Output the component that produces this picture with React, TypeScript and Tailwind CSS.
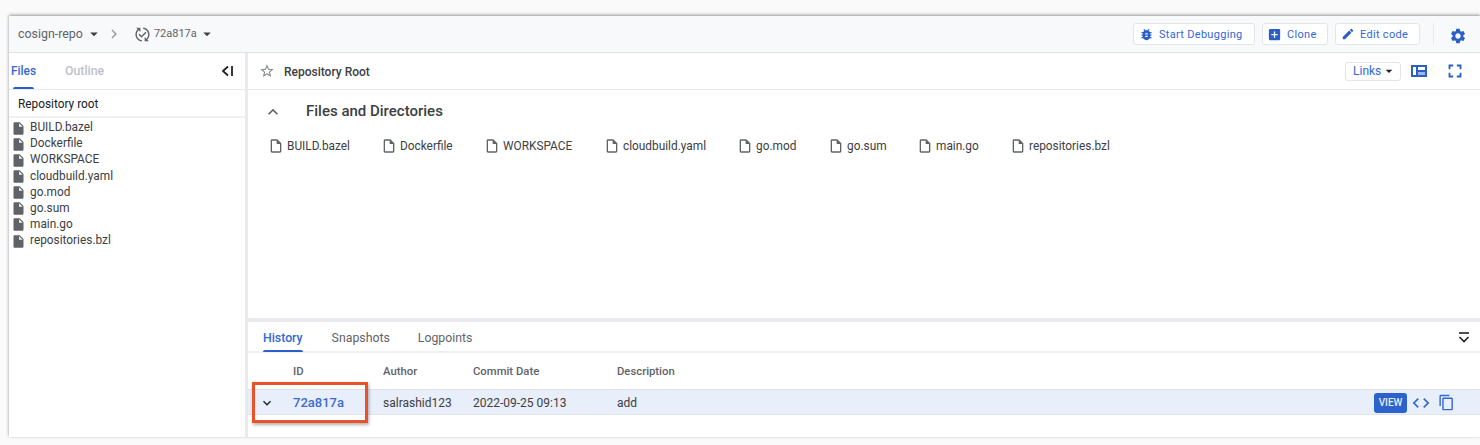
import {
  MdAddBox,
  MdArrowDropDown,
  MdBugReport,
  MdChevronRight,
  MdCode,
  MdContentCopy,
  MdEdit,
  MdFullscreen,
  MdInsertDriveFile,
  MdKeyboardArrowDown,
  MdKeyboardArrowUp,
  MdOutlineInsertDriveFile,
  MdPublishedWithChanges,
  MdSettings,
  MdStarBorder,
} from 'react-icons/md';

const FILES = ['BUILD.bazel', 'Dockerfile', 'WORKSPACE', 'cloudbuild.yaml', 'go.mod', 'go.sum', 'main.go', 'repositories.bzl'];

const GRID_FILES = [
  { name: 'BUILD.bazel', width: 'w-[113px]' },
  { name: 'Dockerfile', width: 'w-[103px]' },
  { name: 'WORKSPACE', width: 'w-[120px]' },
  { name: 'cloudbuild.yaml', width: 'w-[133px]' },
  { name: 'go.mod', width: 'w-[91px]' },
  { name: 'go.sum', width: 'w-[89px]' },
  { name: 'main.go', width: 'w-[93px]' },
  { name: 'repositories.bzl', width: 'w-[110px]' },
];

export default function App() {
  return (
    <div className="h-[445px] w-[1480px] overflow-hidden bg-[#fafafa] pl-[9px] pt-4 font-['Roboto',sans-serif] text-[11.85px] text-[#3c4043]">
      <div className="relative flex h-[421px] flex-col bg-white shadow-[0_-1px_3px_rgba(60,64,67,0.55)]">
        <header className="flex h-[37px] shrink-0 items-center border-b border-[#e0e2e5] bg-[#f8f9fa] pl-[9px]">
          <span className="text-[12.4px] text-[#5f6368]">cosign-repo</span>
          <MdArrowDropDown className="ml-[2px] h-[18px] w-[18px] text-[#3c4043]" />
          <MdChevronRight className="ml-[2px] h-[18px] w-[18px] text-[#9aa0a6]" />
          <MdPublishedWithChanges className="ml-[11px] h-[17px] w-[17px] text-[#5f6368]" />
          <span className="ml-[3px] text-[11px] text-[#5f6368]">72a817a</span>
          <MdArrowDropDown className="ml-[1px] h-[18px] w-[18px] text-[#3c4043]" />
          <div className="ml-auto flex items-center pr-[13px] text-[11px] font-medium tracking-[0.3px] text-[#3367d6]">
            <button className="flex h-[22px] w-[122px] items-center rounded-[3px] border border-[#e3e5e8] bg-white pl-[5px]">
              <MdBugReport className="h-[15px] w-[15px] text-[#2b5fc7]" />
              <span className="ml-[5px] mt-[2px] font-normal">Start Debugging</span>
            </button>
            <button className="ml-[7px] flex h-[22px] w-[66px] items-center rounded-[3px] border border-[#e3e5e8] bg-white pl-[4px]">
              <MdAddBox className="h-[15px] w-[15px] text-[#2b5fc7]" />
              <span className="ml-[5px] mt-[2px] font-normal">Clone</span>
            </button>
            <button className="ml-[7px] flex h-[22px] w-[85px] items-center rounded-[3px] border border-[#e3e5e8] bg-white pl-[5px]">
              <MdEdit className="h-[14px] w-[14px] text-[#2b5fc7]" />
              <span className="ml-[5px] mt-[2px] font-normal">Edit code</span>
            </button>
            <div className="ml-[13px] h-[22px] w-px bg-[#e8eaed]" />
            <MdSettings className="ml-[15px] mt-[3px] h-[18px] w-[18px] text-[#2b5fc7]" />
          </div>
        </header>

        <div className="flex min-h-0 flex-1">
          <aside className="flex w-[236px] shrink-0 flex-col">
            <div className="flex h-[37px] shrink-0 border-b border-[#e8eaed] pl-[2px]">
              <div className="relative flex w-[25px] items-center justify-center pt-px font-medium text-[#3367d6]">
                Files
                <span className="absolute bottom-0 left-[2px] h-[2px] w-[21px] rounded-t-sm bg-[#2b5fc7]" />
              </div>
              <div className="ml-[29px] flex items-center pt-px text-[12.3px] font-medium text-[#bdc1c6]">Outline</div>
              <svg viewBox="0 0 14 12" className="ml-auto mr-[11px] mt-[12px] h-3 w-[14px] text-[#202124]" fill="none" stroke="currentColor" strokeWidth="1.8">
                <path d="M8 1.5 3 6l5 4.5" />
                <path d="M12 1v10" />
              </svg>
            </div>
            <div className="flex h-[28px] shrink-0 items-center border-b-2 border-[#eff0f1] pl-[9px] pt-[3px] text-[#202124]">Repository root</div>
            <ul className="pl-[3px] pt-[2px]">
              {FILES.map((file) => (
                <li key={file} className="flex h-[16.15px] items-center text-[#3c4043]">
                  <MdInsertDriveFile className="ml-[-1px] h-[15px] w-[15px] text-[#5f6368]" />
                  <span className="ml-[4px]">{file}</span>
                </li>
              ))}
            </ul>
          </aside>

          <main className="flex min-w-0 flex-1 flex-col border-l-[3px] border-[#e8eaed]">
            <div className="flex h-[37px] shrink-0 items-center border-b border-[#e8eaed] pl-[11px] pr-[14px]">
              <MdStarBorder className="h-[16px] w-[16px] text-[#80868b]" />
              <span className="ml-[9px] pt-px text-xs font-medium text-[#3c4043]">Repository Root</span>
              <button className="ml-auto flex h-[19px] w-[56px] items-center rounded-[3px] border border-[#e3e5e8] pl-[7px] text-xs text-[#3367d6]">
                Links
                <MdArrowDropDown className="h-4 w-4 text-[#202124]" />
              </button>
              <svg viewBox="0 0 16 12" className="ml-[10px] h-3 w-4 text-[#2b5fc7]">
                <path fill="currentColor" d="M0 0h16v12H0zM2 2v8h3V2zm5 0v3h7V2zm0 5v3h7V7z" fillRule="evenodd" />
                <path fill="currentColor" opacity=".45" d="M7 7h7v3H7z" />
              </svg>
              <MdFullscreen className="ml-[17px] h-[22px] w-[22px] text-[#2b5fc7]" />
            </div>

            <section className="min-h-0 flex-1">
              <div className="flex h-[42px] items-center pl-[15px] pt-px">
                <MdKeyboardArrowUp className="h-[20px] w-[20px] text-[#5f6368]" />
                <h2 className="ml-[23px] text-[15px] font-medium text-[#3c4043]">Files and Directories</h2>
              </div>
              <div className="flex pl-[20px] pt-[4px]">
                {GRID_FILES.map((file) => (
                  <div key={file.name} className={`${file.width} flex h-[20px] shrink-0 items-center`}>
                    <MdOutlineInsertDriveFile className="h-[16px] w-[16px] text-[#5f6368]" />
                    <span className="ml-[3px] pt-px">{file.name}</span>
                  </div>
                ))}
              </div>
            </section>

            <section className="h-[119px] shrink-0 border-t-4 border-[#e8eaed]">
              <div className="flex h-[31px] border-b-2 border-[#eff0f1] pl-[15px] text-[12.3px]">
                <div className="relative flex items-center pt-[3px] font-medium text-[#3367d6]">
                  History
                  <span className="absolute bottom-[-1px] left-0 h-[2px] w-full rounded-t-sm bg-[#2b5fc7]" />
                </div>
                <div className="ml-[29px] flex items-center pt-[3px] text-[#5f6368]">Snapshots</div>
                <div className="ml-[28px] flex items-center pt-[3px] text-[#5f6368]">Logpoints</div>
                <svg viewBox="0 0 14 12" className="ml-auto mr-[9px] mt-[10px] h-3 w-[14px] text-[#202124]" fill="none" stroke="currentColor" strokeWidth="1.6">
                  <path d="M2 1h10" />
                  <path d="M2.5 5 7 9.5 11.5 5" />
                </svg>
              </div>
              <div className="flex h-[36px] items-center pt-[3px] text-[11.3px] font-medium text-[#5f6368]">
                <span className="ml-[45px] w-[90px]">ID</span>
                <span className="w-[90px]">Author</span>
                <span className="w-[144px]">Commit Date</span>
                <span>Description</span>
              </div>
              <div className="flex h-[26px] items-center border-y border-[#dfe3ea] bg-[#e8eefa] pt-px text-xs">
                <MdKeyboardArrowDown className="ml-[11px] h-[16px] w-[16px] text-[#202124]" />
                <span className="ml-[18px] w-[90px] text-[13px] font-medium text-[#3a6bd0]">72a817a</span>
                <span className="w-[90px]">salrashid123</span>
                <span className="w-[144px]">2022-09-25 09:13</span>
                <span>add</span>
                <button className="ml-auto flex h-[20px] w-[33px] items-center justify-center rounded-[3px] bg-[#2b62cb] text-[10px] font-medium text-[#e8eefa]">VIEW</button>
                <MdCode className="ml-[4px] h-[20px] w-[20px] text-[#3367d6]" />
                <MdContentCopy className="ml-[7px] mr-[25px] h-[17px] w-[17px] text-[#3367d6]" />
              </div>
            </section>
          </main>
        </div>

        <div className="pointer-events-none absolute left-[243px] top-[366px] h-[41px] w-[116px] border-[3px] border-[#e8532b] shadow-[1px_2px_3px_rgba(0,0,0,0.3)]" />
      </div>
    </div>
  );
}
